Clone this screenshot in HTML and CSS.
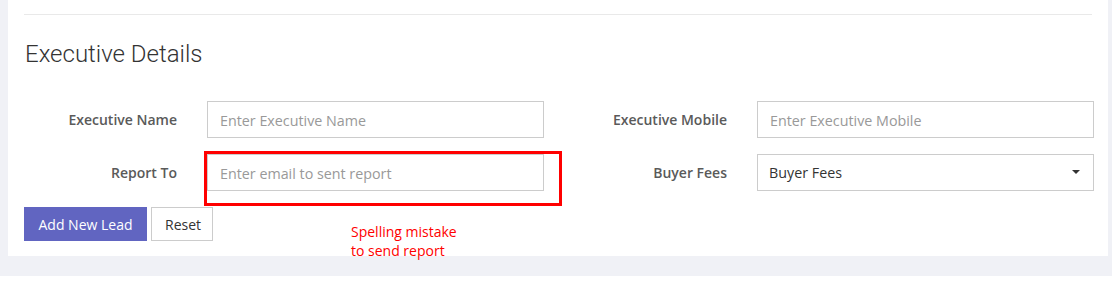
FILE: index.html
```html
<!doctype html>
<html lang="en">
  <head>
    <meta charset="UTF-8" />
    <meta name="viewport" content="width=device-width, initial-scale=1.0" />
    <title>Executive Details</title>
    <link rel="stylesheet" href="styles.css">
  </head>
  <body>
    <div class="page">
      <div class="card">
        <hr class="divider" />
        <h2 class="section-title">Executive Details</h2>

        <form class="lead-form">
          <div class="form-row">
            <div class="form-group">
              <label for="execName">Executive Name</label>
              <input type="text" id="execName" placeholder="Enter Executive Name" />
            </div>
            <div class="form-group">
              <label for="execMobile">Executive Mobile</label>
              <input type="text" id="execMobile" placeholder="Enter Executive Mobile" />
            </div>
          </div>

          <div class="form-row">
            <div class="form-group">
              <label for="reportTo">Report To</label>
              <input type="text" id="reportTo" placeholder="Enter email to sent report" />
            </div>
            <div class="form-group">
              <label for="buyerFees">Buyer Fees</label>
              <div class="select-box">
                <select id="buyerFees">
                  <option>Buyer Fees</option>
                </select>
                <span class="caret"></span>
              </div>
            </div>
          </div>

          <div class="form-actions">
            <button type="button" class="btn btn-primary">Add New Lead</button>
            <button type="reset" class="btn btn-default">Reset</button>
          </div>
        </form>

        <!-- review annotation -->
        <div class="note-box"></div>
        <div class="note-text">Spelling mistake<br>to send report</div>
      </div>
    </div>
  </body>
</html>
```

FILE: styles.css
```css
* {
  box-sizing: border-box;
}

body {
  margin: 0;
  background: #ffffff;
  font-family: 'Open Sans', 'Liberation Sans', sans-serif;
  font-size: 14px;
  color: #333;
}

.page {
  background: #f0f1f6;
  padding: 0 4px 20px 8px;
}

.card {
  position: relative;
  background: #ffffff;
  padding: 14px 16px 15px 16px;
  height: 256px;
}

.divider {
  margin: 0;
  border: none;
  border-top: 1px solid #e9e9e9;
}

.section-title {
  margin: 26px 0 0 1px;
  font-family: Roboto, 'Liberation Sans', sans-serif;
  font-weight: 300;
  font-size: 24px;
  line-height: 26px;
  color: #333;
}

.lead-form {
  margin-top: 34px;
}

.form-row {
  display: flex;
  gap: 30px;
  margin-bottom: 16px;
}

.form-group {
  display: flex;
  align-items: center;
  gap: 30px;
}

.form-group label {
  width: 153px;
  text-align: right;
  font-weight: 600;
  font-size: 14px;
  color: #5a5a5a;
}

.form-group input,
.select-box {
  width: 337px;
  height: 37px;
}

.form-group input {
  border: 1px solid #ccc;
  padding: 2px 12px 0 12px;
  font-family: inherit;
  font-size: 14.3px;
  color: #333;
  outline: none;
}

.form-group input::placeholder {
  color: #999;
}

.select-box {
  position: relative;
}

.select-box select {
  appearance: none;
  -webkit-appearance: none;
  width: 100%;
  height: 100%;
  border: 1px solid #ccc;
  border-radius: 0;
  background: #fff;
  padding: 0 12px 0 11px;
  font-family: inherit;
  font-size: 14.3px;
  color: #333;
}

.caret {
  position: absolute;
  right: 14px;
  top: 16px;
  width: 0;
  height: 0;
  border-left: 4px solid transparent;
  border-right: 4px solid transparent;
  border-top: 4px solid #333;
}

.form-actions {
  display: flex;
  gap: 4px;
}

.btn {
  height: 34px;
  padding: 1px 13px 0 13px;
  font-family: inherit;
  font-size: 14px;
  border-radius: 0;
  cursor: pointer;
}

.btn-primary {
  background: #6165c1;
  border: 1px solid #6165c1;
  color: #fff;
  width: 123px;
}

.btn-default {
  background: #fff;
  border: 1px solid #ccc;
  color: #333;
  width: 62px;
}

.note-box {
  position: absolute;
  left: 196px;
  top: 151px;
  width: 358px;
  height: 55px;
  border: 3px solid #ff0000;
}

.note-text {
  position: absolute;
  left: 343px;
  top: 222px;
  font-size: 14px;
  line-height: 19px;
  color: #ff0000;
}
```
